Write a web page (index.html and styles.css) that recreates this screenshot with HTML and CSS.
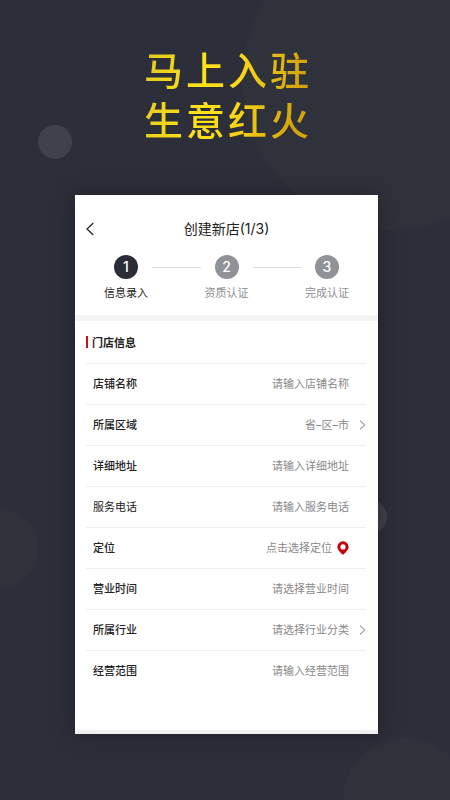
FILE: index.html
```html
<!DOCTYPE html>
<html lang="zh-CN">
<head>
    <meta charset="UTF-8">
    <meta name="viewport" content="width=device-width, initial-scale=1.0">
    <title>创建新店</title>
    <link rel="stylesheet" href="styles.css">
</head>
<body>
    <div class="page">
        <div class="bubble bubble-large"></div>
        <div class="bubble bubble-small"></div>
        <div class="bubble bubble-left"></div>
        <div class="bubble bubble-right"></div>
        <div class="bubble bubble-bottom"></div>

        <h1 class="slogan">马上入驻<br>生意红火</h1>

        <main class="card">
            <header class="topbar">
                <button class="back" type="button" aria-label="返回">
                    <svg width="8" height="14" viewBox="0 0 8 14"><path d="M7.3 1 1 7l6.3 6" /></svg>
                </button>
                <h2 class="title">创建新店(1/3)</h2>
            </header>

            <ol class="steps">
                <li class="step active"><span class="num">1</span><span>信息录入</span></li>
                <li class="line"></li>
                <li class="step"><span class="num">2</span><span>资质认证</span></li>
                <li class="line"></li>
                <li class="step"><span class="num">3</span><span>完成认证</span></li>
            </ol>

            <form class="form">
                <h3 class="section">门店信息</h3>

                <div class="row">
                    <label for="name">店铺名称</label>
                    <input id="name" type="text" placeholder="请输入店铺名称">
                </div>
                <div class="row">
                    <label for="area">所属区域</label>
                    <button class="picker" id="area" type="button">省–区–市
                        <svg class="arrow" width="7" height="10" viewBox="0 0 7 10"><path d="M1 .7 5.8 5 1 9.3" /></svg>
                    </button>
                </div>
                <div class="row">
                    <label for="address">详细地址</label>
                    <input id="address" type="text" placeholder="请输入详细地址">
                </div>
                <div class="row">
                    <label class="light" for="phone">服务电话</label>
                    <input id="phone" type="tel" placeholder="请输入服务电话">
                </div>
                <div class="row">
                    <label for="location">定位</label>
                    <button class="picker locate" id="location" type="button">点击选择定位
                        <svg class="pin" width="12" height="14" viewBox="0 0 12 14"><path fill-rule="evenodd" d="M6 .3A5.600 5.600 0 0 0 .4 5.900C.4 9 3.300 11 6 13.800 8.700 11 11.600 9 11.600 5.900A5.600 5.600 0 0 0 6 .3zm0 3a2.600 2.600 0 1 1 0 5.200 2.600 2.600 0 0 1 0-5.200z" /></svg>
                    </button>
                </div>
                <div class="row">
                    <label for="hours">营业时间</label>
                    <input id="hours" type="text" placeholder="请选择营业时间">
                </div>
                <div class="row">
                    <label for="industry">所属行业</label>
                    <button class="picker" id="industry" type="button">请选择行业分类
                        <svg class="arrow" width="7" height="10" viewBox="0 0 7 10"><path d="M1 .7 5.8 5 1 9.3" /></svg>
                    </button>
                </div>
                <div class="row">
                    <label for="scope">经营范围</label>
                    <input id="scope" type="text" placeholder="请输入经营范围">
                </div>
            </form>
        </main>
    </div>
</body>
</html>
```

FILE: styles.css
```css
* {
    margin: 0;
    padding: 0;
    box-sizing: border-box;
}

body {
    font-family: Inter, 'Noto Sans CJK SC', sans-serif;
    font-size: 11px;
    color: #222222;
    background: #2c2e39;
}

button,
input {
    font: inherit;
    border: none;
    outline: none;
    background: none;
}

.page {
    position: relative;
    min-height: 100vh;
    padding: 43px 72px 66px 75px;
    overflow: hidden;
}

/* background circles */
.bubble {
    position: absolute;
    border-radius: 50%;
    background: #30323b;
}

.bubble-large {
    top: -70px;
    right: -92px;
    width: 300px;
    height: 300px;
}

.bubble-small {
    top: 125px;
    left: 38px;
    width: 34px;
    height: 34px;
    background: #40414c;
}

.bubble-left {
    top: 509px;
    left: -40px;
    width: 79px;
    height: 79px;
}

.bubble-right {
    top: 500px;
    right: 63px;
    width: 34px;
    height: 34px;
    background: #40414c;
}

.bubble-bottom {
    bottom: -62px;
    right: -17px;
    width: 124px;
    height: 124px;
}

.slogan {
    position: relative;
    width: max-content;
    margin: 0 auto;
    padding-left: 3px;
    font-family: 'Noto Sans CJK SC', sans-serif;
    font-size: 39px;
    font-weight: 500;
    line-height: 50px;
    letter-spacing: 3px;
    background: linear-gradient(100deg, #dfc820 0%, #ffe21a 36%, #fbd817 55%, #d3a40c 88%);
    -webkit-background-clip: text;
    background-clip: text;
    color: transparent;
}

.card {
    position: relative;
    margin-top: 52px;
    padding-bottom: 39px;
    background: #ffffff;
    border-bottom: 4px solid #f1f1f1;
    box-shadow: 0 0 20px rgba(24, 20, 28, 0.5);
}

.topbar {
    display: grid;
    grid-template-columns: 20px 1fr 20px;
    align-items: center;
    padding: 24px 11px 16px;
}

.back {
    display: flex;
    height: 20px;
    align-items: center;
}

.back path {
    fill: none;
    stroke: #222222;
    stroke-width: 1.2;
}

.title {
    font-size: 14px;
    font-weight: 400;
    line-height: 20px;
    text-align: center;
}

.steps {
    display: flex;
    padding: 0 29px 14px;
    list-style: none;
    border-bottom: 6px solid #f4f4f4;
}

.step {
    display: flex;
    flex-direction: column;
    align-items: center;
    gap: 6px;
    line-height: 16px;
    color: #8e8e92;
}

.num {
    width: 24px;
    height: 24px;
    border-radius: 50%;
    background: #919298;
    color: #ffffff;
    font-size: 14px;
    font-weight: 500;
    line-height: 24px;
    text-align: center;
}

.step.active {
    color: #222222;
}

.step.active .num {
    background: #2a2c37;
}

.line {
    flex: 1;
    height: 1px;
    margin: 12px 4px 0;
    background: #dddddd;
}

.form {
    padding: 0 12px 0 11px;
}

.section {
    display: flex;
    align-items: center;
    gap: 4px;
    height: 42px;
    font-size: 11px;
    font-weight: 700;
}

.section::before {
    content: '';
    width: 2px;
    height: 12px;
    background: #c8101a;
}

.row {
    display: flex;
    align-items: center;
    height: 41px;
    padding: 0 17px 0 7px;
    border-top: 1px solid #efefef;
    line-height: 40px;
}

.row label {
    font-weight: 500;
    white-space: nowrap;
}

.row .light {
    font-weight: 400;
}

.row input,
.picker {
    flex: 1;
    min-width: 0;
    height: 40px;
    line-height: 40px;
    color: #888888;
    text-align: right;
}

.row input::placeholder {
    color: #888888;
    opacity: 1;
}

.picker {
    position: relative;
}

.arrow {
    position: absolute;
    top: 15px;
    right: -17px;
    fill: none;
    stroke: #777777;
}

.locate {
    display: flex;
    align-items: center;
    justify-content: flex-end;
    gap: 5px;
}

.pin {
    fill: #c4000c;
}
```
